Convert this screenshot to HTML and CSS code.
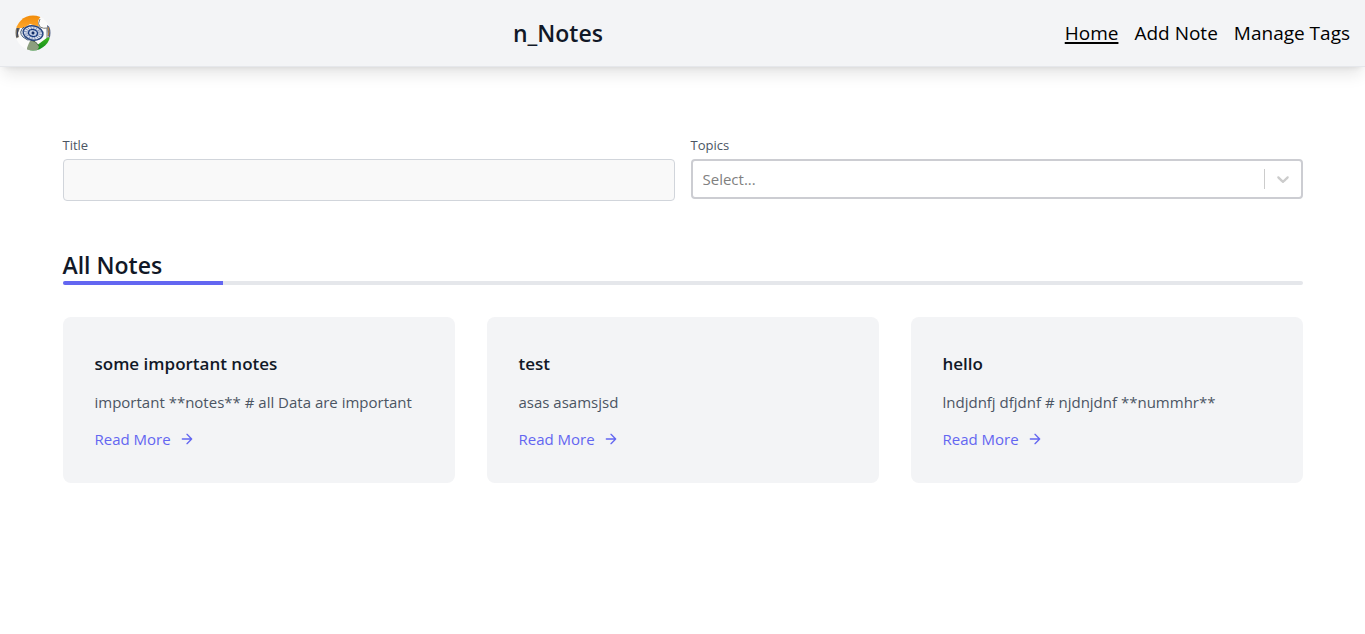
FILE: index.html
```html
<!DOCTYPE html>
<html lang="en">
<head>
  <meta charset="utf-8">
  <meta name="viewport" content="width=device-width, initial-scale=1">
  <title>n_Notes</title>
  <link rel="stylesheet" href="styles.css">
</head>
<body>
  <header class="topbar">
    <a class="logo" href="#" aria-label="n_Notes home">
      <svg viewBox="0 0 36 36" width="36" height="36" aria-hidden="true">
        <defs>
          <clipPath id="disc"><circle cx="18" cy="18" r="17.5"/></clipPath>
          <linearGradient id="saffron" x1="0" y1="0" x2="0" y2="1"><stop offset="0" stop-color="#f08a08"/><stop offset="1" stop-color="#ffa72b"/></linearGradient>
          <linearGradient id="green" x1="0" y1="0" x2="0" y2="1"><stop offset="0" stop-color="#3fb51f"/><stop offset="1" stop-color="#0c8a1c"/></linearGradient>
        </defs>
        <g clip-path="url(#disc)">
          <path d="M0 0h36v36H0z" fill="#fbfbfb"/>
          <path d="M0 0h28q-5 3-5 8l1 4-9-3-6 4H0z" fill="url(#saffron)"/>
          <path d="M0 13h5l-2 5 1 4-4 2z" fill="#7e7563"/>
          <path d="M3 13l-1 9" fill="none" stroke="#2b3a5e" stroke-width="1"/>
          <path d="M21 31l12-9 3 1v13H14z" fill="url(#green)"/>
          <path d="M12 33q2-6 4-8 5 1 8 7l-2 4-10-1z" fill="#8c9f7e"/>
          <path d="M16 25q5 1 8 6" fill="none" stroke="#4b5d44" stroke-width="1"/>
          <path d="M32 10l4 3v11l-3-3z" fill="#56658c"/>
          <path d="M33 12q2 5 0 9" fill="none" stroke="#c38a35" stroke-width="1"/>
          <path d="M25 4q-3 5 0 8 4 2 7 1v10" fill="none" stroke="#7b7d7c" stroke-width="1"/>
          <path d="M9 12q-6 5-1 10 4 4 9 3" fill="none" stroke="#405a78" stroke-width="1"/>
          <g transform="rotate(10 18 18)">
            <ellipse cx="18" cy="18" rx="10" ry="7" fill="#dbe1ee" stroke="#26457f" stroke-width="1.5"/>
            <path d="M8 18h20M18 11v14M11 13l14 10M25 13L11 23M14 11l8 14M22 11l-8 14M9 15l18 6M27 15L9 21" stroke="#49639a" stroke-width=".6"/>
            <ellipse cx="18" cy="18" rx="4.5" ry="3.5" fill="#c3cee4" stroke="#16397f" stroke-width="1.3"/>
            <circle cx="18" cy="18" r="1.5" fill="#112d68"/>
          </g>
        </g>
      </svg>
    </a>
    <h1 class="brand">n_Notes</h1>
    <nav class="nav" aria-label="Main">
      <a class="nav-link nav-link-active" href="#" aria-current="page">Home</a>
      <a class="nav-link" href="#add">Add Note</a>
      <a class="nav-link" href="#tags">Manage Tags</a>
    </nav>
  </header>

  <main class="page">
    <form class="filters">
      <div class="field">
        <label class="label" for="title">Title</label>
        <input class="text-input" id="title" name="title" type="text">
      </div>
      <div class="field">
        <label class="label" for="topics">Topics</label>
        <div class="select-box">
          <select class="select" id="topics" name="topics">
            <option>Select...</option>
          </select>
          <span class="select-indicator" aria-hidden="true">
            <svg viewBox="0 0 20 20" width="20" height="20"><path fill="currentColor" d="M4.516 7.548c0.436-0.446 1.043-0.481 1.576 0l3.908 3.747 3.908-3.747c0.533-0.481 1.141-0.446 1.574 0 0.436 0.445 0.408 1.197 0 1.615-0.406 0.418-4.695 4.502-4.695 4.502-0.217 0.223-0.502 0.335-0.787 0.335s-0.57-0.112-0.789-0.335c0 0-4.287-4.084-4.695-4.502s-0.436-1.17 0-1.615z"/></svg>
          </span>
        </div>
      </div>
    </form>

    <section class="notes">
      <h2 class="section-title">All Notes</h2>
      <div class="rule"><div class="rule-accent"></div></div>
      <div class="grid">
        <article class="card">
          <h3 class="card-title">some important notes</h3>
          <p class="card-text">important **notes** # all Data are important</p>
          <a class="more" href="#note-1">Read More
            <svg class="arrow" viewBox="0 0 24 24" width="16" height="16" aria-hidden="true"><path d="M5 12h14M12 5l7 7-7 7"/></svg></a>
        </article>
        <article class="card">
          <h3 class="card-title">test</h3>
          <p class="card-text">asas asamsjsd</p>
          <a class="more" href="#note-2">Read More
            <svg class="arrow" viewBox="0 0 24 24" width="16" height="16" aria-hidden="true"><path d="M5 12h14M12 5l7 7-7 7"/></svg></a>
        </article>
        <article class="card">
          <h3 class="card-title">hello</h3>
          <p class="card-text">lndjdnfj dfjdnf # njdnjdnf **nummhr**</p>
          <a class="more" href="#note-3">Read More
            <svg class="arrow" viewBox="0 0 24 24" width="16" height="16" aria-hidden="true"><path d="M5 12h14M12 5l7 7-7 7"/></svg></a>
        </article>
      </div>
    </section>
  </main>
</body>
</html>
```

FILE: styles.css
```css
*, *::before, *::after { box-sizing: border-box; }

body {
  margin: 0;
  background: #fff;
  color: #111827;
  font-family: "Open Sans", "Noto Sans", sans-serif;
  font-size: 15px;
  line-height: 24px;
}

h1, h2, h3, p { margin: 0; }
a { color: inherit; text-decoration: none; }

.topbar {
  display: flex;
  align-items: center;
  justify-content: space-between;
  padding: 15px;
  background: #f3f4f6;
  border-bottom: 1px solid #e5e7eb;
  box-shadow: 0 10px 15px -3px rgba(0, 0, 0, .1), 0 4px 6px -4px rgba(0, 0, 0, .1);
}
.logo { display: block; height: 36px; }
.logo svg { display: block; }
.brand { font-size: 23px; line-height: 36px; font-weight: 600; }
.nav { display: flex; gap: 16px; color: #000; font-size: 19px; line-height: 28px; }
.nav-link-active { text-decoration: underline; text-decoration-thickness: 2px; text-underline-offset: 2px; }

.page { max-width: 1280px; margin: 0 auto; padding: 64px 20px; }

.filters { display: grid; grid-template-columns: 1fr 1fr; gap: 16px; }
.field { display: flex; flex-direction: column; }
.label { color: #4b5563; font-size: 13px; line-height: 28px; }
.text-input {
  width: 100%;
  height: 42px;
  padding: 4px 12px;
  border: 1px solid #d1d5db;
  border-radius: 4px;
  background: #f9f9f9;
  color: #374151;
  font: inherit;
}
.select-box { position: relative; }
.select {
  display: block;
  width: 100%;
  height: 40px;
  padding: 0 48px 0 10px;
  border: 2px solid #cccdd2;
  border-radius: 4px;
  background: #fff;
  color: #808080;
  font: inherit;
  appearance: none;
}
.select-indicator {
  position: absolute;
  top: 10px;
  right: 2px;
  bottom: 10px;
  display: flex;
  align-items: center;
  padding: 0 8px;
  border-left: 1px solid #ccc;
  color: #ccc;
  pointer-events: none;
}

.notes { margin-top: 48px; }
.section-title { font-size: 23px; line-height: 32px; font-weight: 600; }
.rule { height: 4px; border-radius: 2px; background: #e5e7eb; overflow: hidden; }
.rule-accent { width: 160px; height: 100%; background: #6366f1; }

.grid {
  display: grid;
  grid-template-columns: repeat(3, 1fr);
  gap: 32px;
  margin-top: 32px;
}
.card { padding: 32px; border-radius: 8px; background: #f3f4f6; }
.card-title { margin-bottom: 10px; font-size: 17px; line-height: 30px; font-weight: 600; }
.card-text { color: #4b5563; line-height: 26px; }
.more { display: inline-flex; align-items: center; margin-top: 12px; color: #6366f1; }
.arrow {
  margin-left: 8px;
  fill: none;
  stroke: currentColor;
  stroke-width: 2;
  stroke-linecap: round;
  stroke-linejoin: round;
}
```
